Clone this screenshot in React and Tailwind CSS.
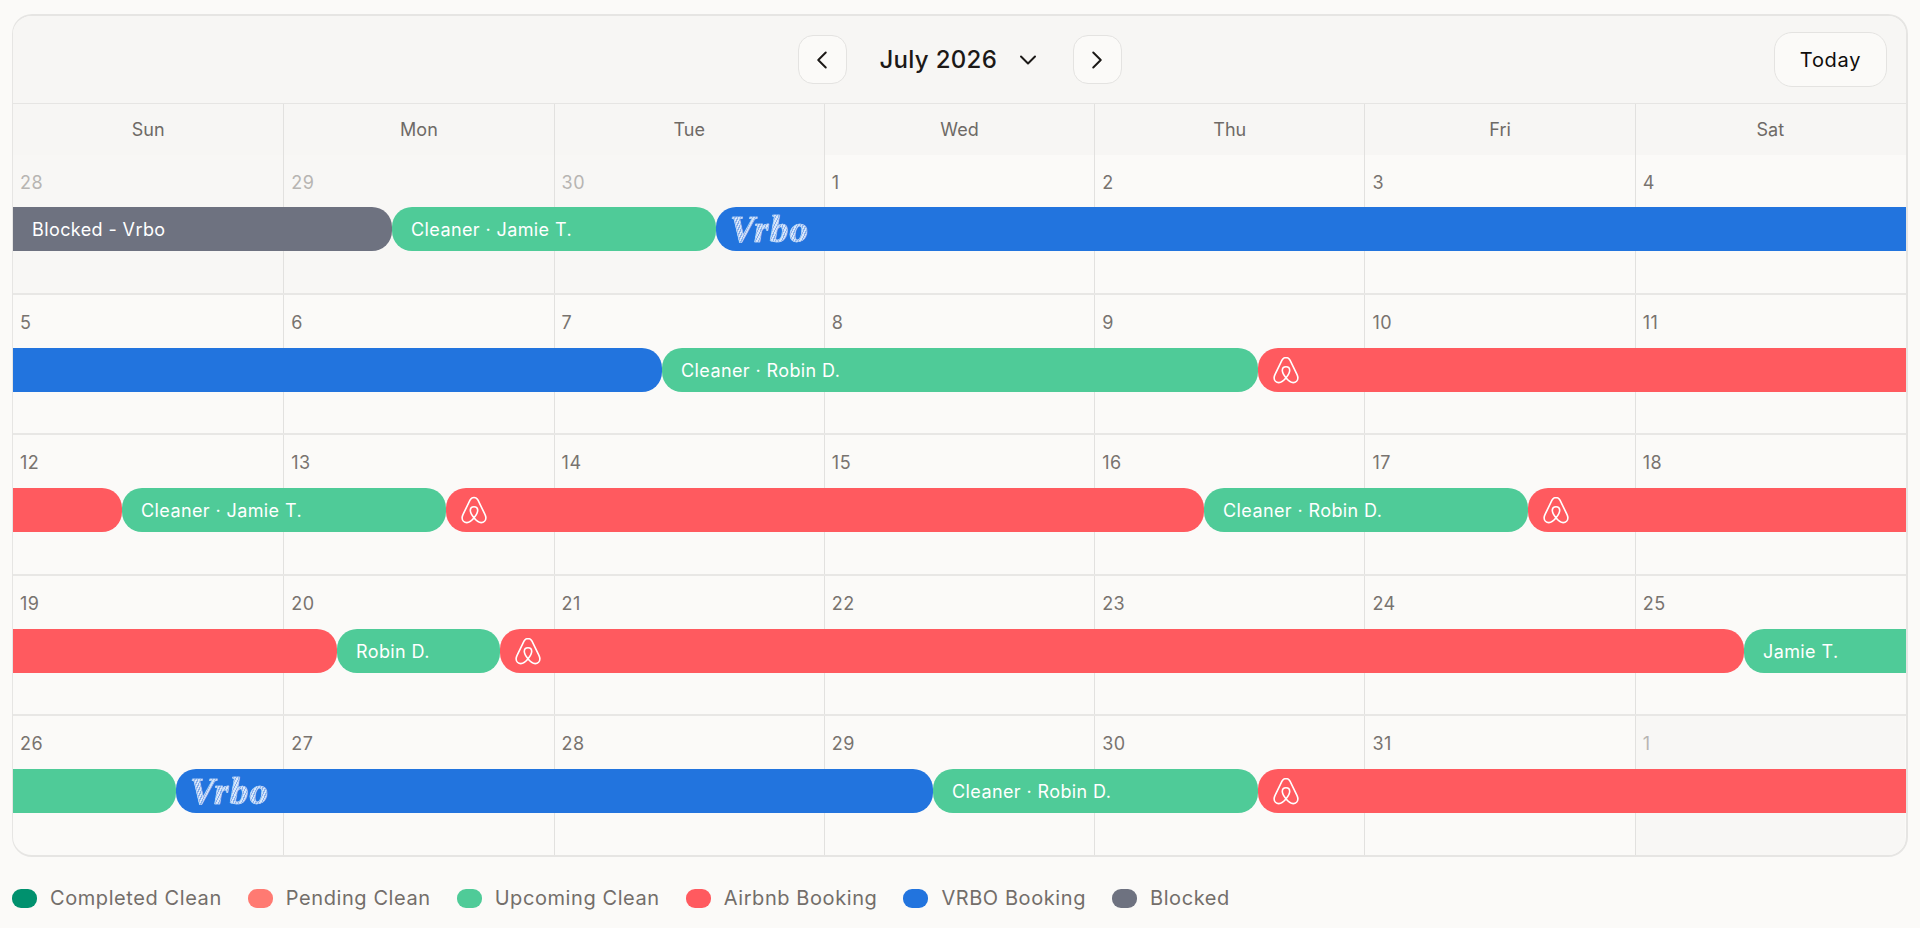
import React from "react";
import { ChevronLeft, ChevronRight, ChevronDown } from "lucide-react";

const days = ["Sun", "Mon", "Tue", "Wed", "Thu", "Fri", "Sat"];

const AIR = "bg-[#ff5a5f]";
const VR = "bg-[#2274de]";
const GR = "bg-[#4fcb98]";
const BL = "bg-[#6e7280]";

const weeks = [
  {
    cells: [[28, 1], [29, 1], [30, 1], [1], [2], [3], [4]],
    top: "top-[52px]",
    h: "h-[140px] border-b-2 border-[#e8e7e5]",
    bars: [
      { c: BL, w: "w-[379px]", text: "Blocked - Vrbo", square: "rounded-r-[20px]" },
      { c: GR, w: "w-[324px]", text: "Cleaner · Jamie T.", square: "rounded-[20px]" },
      { c: VR, w: "flex-1", logo: "vrbo", square: "rounded-l-[20px]" },
    ],
  },
  {
    cells: [[5], [6], [7], [8], [9], [10], [11]],
    top: "top-[53px]",
    h: "h-[140px] border-b-2 border-[#e8e7e5]",
    bars: [
      { c: VR, w: "w-[649px]", square: "rounded-r-[20px]" },
      { c: GR, w: "w-[596px]", text: "Cleaner · Robin D.", square: "rounded-[20px]" },
      { c: AIR, w: "flex-1", logo: "air", square: "rounded-l-[20px]" },
    ],
  },
  {
    cells: [[12], [13], [14], [15], [16], [17], [18]],
    top: "top-[53px]",
    h: "h-[141px] border-b-2 border-[#e8e7e5]",
    bars: [
      { c: AIR, w: "w-[109px]", square: "rounded-r-[20px]" },
      { c: GR, w: "w-[324px]", text: "Cleaner · Jamie T.", square: "rounded-[20px]" },
      { c: AIR, w: "w-[758px]", logo: "air", square: "rounded-[20px]" },
      { c: GR, w: "w-[324px]", text: "Cleaner · Robin D.", square: "rounded-[20px]" },
      { c: AIR, w: "flex-1", logo: "air", square: "rounded-l-[20px]" },
    ],
  },
  {
    cells: [[19], [20], [21], [22], [23], [24], [25]],
    top: "top-[53px]",
    h: "h-[140px] border-b-2 border-[#e8e7e5]",
    bars: [
      { c: AIR, w: "w-[324px]", square: "rounded-r-[20px]" },
      { c: GR, w: "w-[163px]", text: "Robin D.", square: "rounded-[20px]" },
      { c: AIR, w: "w-[1244px]", logo: "air", square: "rounded-[20px]" },
      { c: GR, w: "flex-1", text: "Jamie T.", square: "rounded-l-[20px]" },
    ],
  },
  {
    cells: [[26], [27], [28], [29], [30], [31], [1, 1]],
    top: "top-[53px]",
    h: "flex-1",
    bars: [
      { c: GR, w: "w-[163px]", square: "rounded-r-[20px]" },
      { c: VR, w: "w-[757px]", logo: "vrbo", square: "rounded-[20px]" },
      { c: GR, w: "w-[325px]", text: "Cleaner · Robin D.", square: "rounded-[20px]" },
      { c: AIR, w: "flex-1", logo: "air", square: "rounded-l-[20px]" },
    ],
  },
];

const legend = [
  ["bg-[#00916e]", "Completed Clean"],
  ["bg-[#ff7a72]", "Pending Clean"],
  ["bg-[#4fcb98]", "Upcoming Clean"],
  ["bg-[#ff5a5f]", "Airbnb Booking"],
  ["bg-[#2274de]", "VRBO Booking"],
  ["bg-[#6e7280]", "Blocked"],
];

function AirbnbMark() {
  return (
    <svg width="26" height="28" viewBox="0 0 26 28" fill="none" stroke="white" strokeWidth="1.6" strokeLinejoin="round">
      <path d="M13 1.5C11.2 1.5 9.9 2.4 9 4.1L2.3 17.9C1.5 19.5 1.1 20.7 1.1 21.8C1.1 24.7 3.2 26.6 5.8 26.6C8.4 26.6 10.8 24.8 13 21.8C15.2 24.8 17.6 26.6 20.2 26.6C22.8 26.6 24.9 24.7 24.9 21.8C24.9 20.7 24.5 19.5 23.7 17.9L17 4.1C16.1 2.4 14.8 1.5 13 1.5Z" />
      <path d="M13 21.8C10.7 18.9 9.3 16.4 9.3 14.4C9.3 12.2 10.9 10.8 13 10.8C15.1 10.8 16.7 12.2 16.7 14.4C16.7 16.4 15.3 18.9 13 21.8Z" />
    </svg>
  );
}

function VrboMark() {
  return (
    <span className="font-['Liberation_Serif',serif] font-bold italic text-[37px] leading-none tracking-[1.3px] [-webkit-text-stroke:0.7px_#b3cff5] text-transparent bg-clip-text bg-[repeating-linear-gradient(115deg,#d8e7fb_0px,#d8e7fb_1.6px,#86aeeb_1.6px,#86aeeb_2.6px)] pr-1">
      Vrbo
    </span>
  );
}

function Bar({ bar }) {
  return (
    <div className={`${bar.c} ${bar.w} ${bar.square} h-[44px] flex items-center text-white text-[18px] tracking-[0.4px] min-w-0 whitespace-nowrap overflow-hidden ${bar.logo === "vrbo" ? "pl-[14px]" : bar.logo === "air" ? "pl-[15px]" : "pl-[19px]"}`}>
      {bar.text}
      {bar.logo === "air" && <AirbnbMark />}
      {bar.logo === "vrbo" && <VrboMark />}
    </div>
  );
}

export default function App() {
  return (
    <div className="h-screen overflow-hidden bg-[#fbfaf8] px-3 pt-[14px] font-['Inter',sans-serif]">
      <div className="h-[843px] overflow-hidden rounded-[20px] border-2 border-l border-[#e6e5e3] bg-[#fbfaf8] flex flex-col">
        <div className="h-[88px] shrink-0 grid grid-cols-[1fr_auto_1fr] items-center bg-[#f7f6f4] border-b border-[#e6e5e3]">
          <div />
          <div className="flex items-center">
            <button className="w-[49px] h-[49px] rounded-[15px] border border-[#e4e3e1] bg-[#fbfaf8] flex items-center justify-center text-[#1c1917]">
              <ChevronLeft size={30} strokeWidth={1.6} />
            </button>
            <div className="w-[226px] flex items-center pl-[33px]">
              <span className="text-[24px] font-medium tracking-[0.3px] text-[#1c1917] leading-none">July 2026</span>
              <ChevronDown size={28} strokeWidth={1.7} className="ml-[17px] text-[#1c1917]" />
            </div>
            <button className="w-[49px] h-[49px] rounded-[15px] border border-[#e4e3e1] bg-[#fbfaf8] flex items-center justify-center text-[#1c1917]">
              <ChevronRight size={30} strokeWidth={1.6} />
            </button>
          </div>
          <div className="flex justify-end pr-[19px]">
            <button className="w-[113px] h-[55px] rounded-[18px] border border-[#e4e3e1] bg-[#fbfaf8] text-[20px] font-normal tracking-[0.7px] text-[#0f0d0b]">
              Today
            </button>
          </div>
        </div>
        <div className="h-[51px] shrink-0 grid grid-cols-7 pr-px bg-[#f7f6f4]">
          {days.map((d, i) => (
            <div key={d} className={`flex items-center justify-center text-[18px] text-[#6e6a66] ${i > 0 ? "border-l border-[#e2e1df]" : ""}`}>
              {d}
            </div>
          ))}
        </div>
        {weeks.map((w, wi) => (
          <div key={wi} className={`relative grid grid-cols-7 pr-px ${w.h}`}>
            {w.cells.map(([n, out], i) => (
              <div key={i} className={`pl-[7px] pt-[15px] text-[18px] leading-[26px] tracking-[0.5px] ${i > 0 ? "border-l border-[#e2e1df]" : ""} ${out ? "bg-[#f8f7f5] text-[#b7b5b2]" : "text-[#78736f]"}`}>
                {n}
              </div>
            ))}
            <div className={`absolute inset-x-0 ${w.top} flex`}>
              {w.bars.map((b, i) => (
                <Bar key={i} bar={b} />
              ))}
            </div>
          </div>
        ))}
      </div>
      <div className="mt-[31px] flex items-center gap-[26px]">
        {legend.map(([c, t]) => (
          <div key={t} className="flex items-center gap-[13px]">
            <span className={`${c} w-[25px] h-[19px] rounded-[9px]`} />
            <span className="text-[20px] tracking-[0.58px] leading-none text-[#736e6a]">{t}</span>
          </div>
        ))}
      </div>
    </div>
  );
}
